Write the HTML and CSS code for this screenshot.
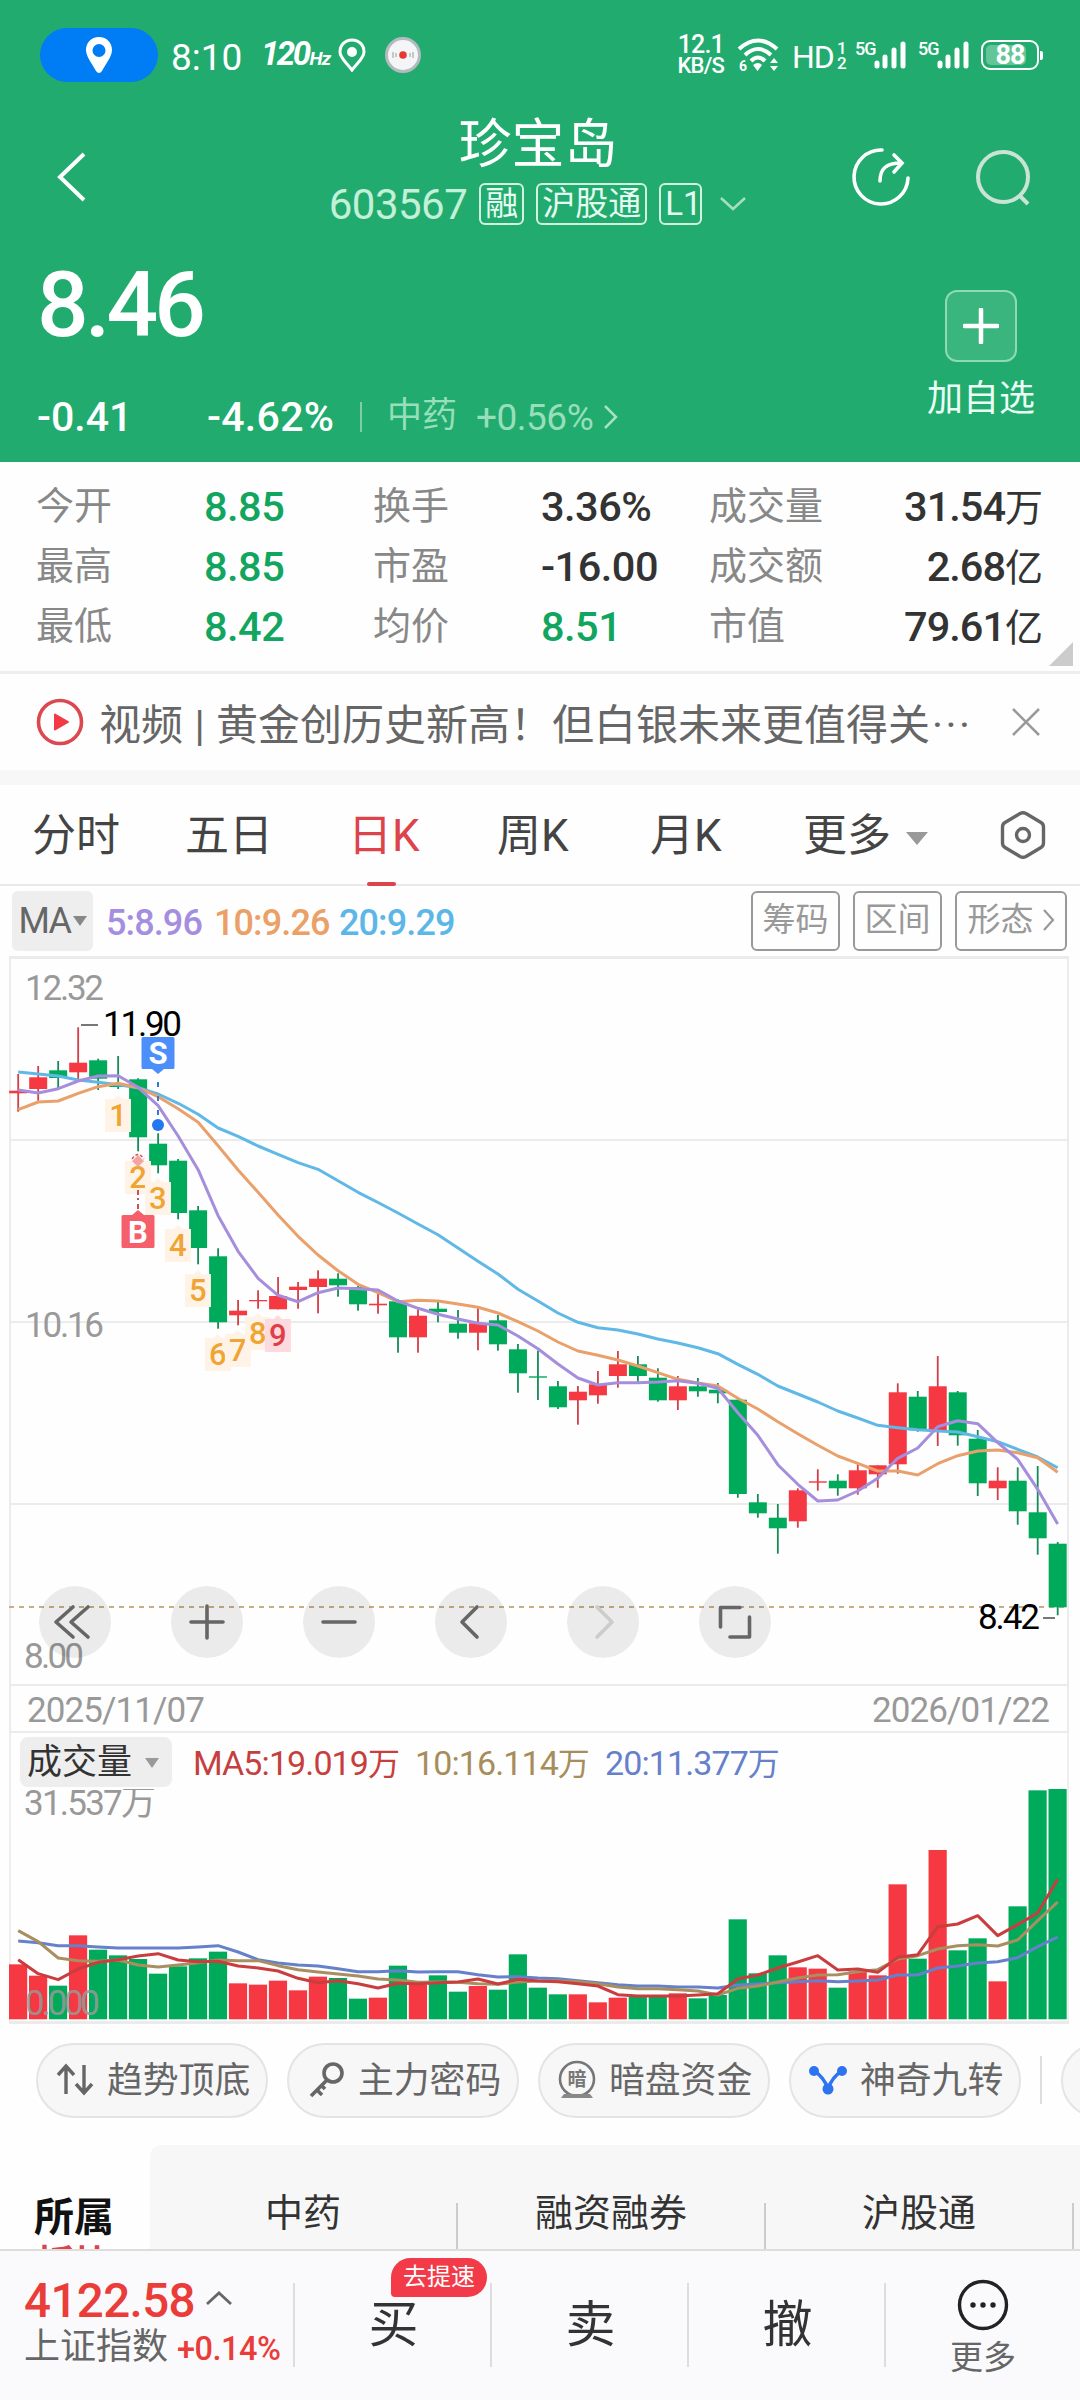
FILE: index.html
```html
<!DOCTYPE html>
<html lang="zh-CN">
<head>
<meta charset="utf-8">
<title>珍宝岛 603567</title>
<link rel="stylesheet" href="styles.css">
</head>
<body>
<header class="top">
  <div class="status">
    <div class="status-left">
      <span class="pill-loc"><svg width="28" height="36" viewBox="0 0 28 36"><path fill="#fff" fill-rule="evenodd" d="M14 0C6 0 1 6 1 13c0 6 5 12 10 21q3 4 6 0c5-9 10-15 10-21C27 6 22 0 14 0zm0 7a6.5 6.5 0 1 1 0 13a6.500 6.500 0 0 1 0-13z"/></svg></span>
      <span class="clock">8:10</span>
      <span class="hz">120<small>Hz</small></span>
      <svg class="pin" width="28" height="34" viewBox="0 0 28 34"><path d="M14 2C7 2 2 7 2 14c0 6 6 10 12 18c6-8 12-12 12-18C26 7 21 2 14 2z" fill="none" stroke="#fff" stroke-width="3"/><circle cx="14" cy="14" r="5" fill="#fff"/></svg>
      <svg class="disc" width="36" height="36" viewBox="0 0 36 36"><circle cx="18" cy="18" r="16.500" fill="#f4f5f6" stroke="#b4bac0" stroke-width="3"/><circle cx="18" cy="18" r="3.800" fill="#e53935"/><path d="M8 15v6M11 16v4M28 15v6M25 16v4" stroke="#999" stroke-width="1"/></svg>
    </div>
    <div class="status-right">
      <span class="speed"><span>12.1</span><span>KB/S</span></span>
      <svg class="wifi" width="42" height="34" viewBox="0 0 42 34"><g fill="none" stroke="#fff" stroke-width="4"><path d="M2 11Q21-6 40 11"/><path d="M8 17Q21 5 34 17"/><path d="M14 23Q21 16 28 23"/></g><path d="M16 27q5-4 9 0l-4.500 6zM33 25l4-5 4 5zM33 28l4 5 4-5z" fill="#fff"/><text x="2" y="33" class="tiny-six">6</text></svg>
      <span class="hd">HD</span><span class="sim">1<br>2</span>
      <span class="net"><b>5G</b><svg width="33" height="28" viewBox="0 0 33 28"><path stroke="#fff" stroke-width="5" stroke-linecap="round" d="M3 22v3M11 16v9M20 9v16M29 3v22"/></svg></span>
      <span class="net"><b>5G</b><svg width="33" height="28" viewBox="0 0 33 28"><path stroke="#fff" stroke-width="5" stroke-linecap="round" d="M3 22v3M11 16v9M20 9v16M29 3v22"/></svg></span>
      <span class="battery"><i></i><em>88</em></span><span class="nub"></span>
    </div>
  </div>

  <div class="nav">
    <svg class="back" width="32" height="52" viewBox="0 0 32 52"><path d="M28 3L4 26L28 49" fill="none" stroke="#fff" stroke-width="4"/></svg>
    <div class="title">
      <h1>珍宝岛</h1>
      <div class="code-row">
        <span class="code">603567</span><span class="tag">融</span><span class="tag">沪股通</span><span class="tag latin">L1</span>
        <svg width="28" height="18" viewBox="0 0 28 18"><path d="M2 3L14 14L26 3" fill="none" stroke="#a5dfc2" stroke-width="2.500"/></svg>
      </div>
    </div>
    <svg class="share" width="64" height="64" viewBox="0 0 64 64"><g fill="none" stroke="#fff" stroke-width="3.600" stroke-linecap="round"><path d="M33 5A27 27 0 1 0 59 33"/><path d="M31 36C31 24 37 18 52 18M45 10l8 8-8 9"/></g></svg>
    <svg class="search" width="62" height="62" viewBox="0 0 62 62"><g fill="none" stroke="#c9e3d5" stroke-width="4"><circle cx="31" cy="30" r="25"/><path d="M47 48l9 9"/></g></svg>
  </div>

  <div class="quote">
    <div class="quote-left">
      <div class="price">8.46</div>
      <div class="change">
        <span class="diff">-0.41</span><span class="pct">-4.62%</span><i></i>
        <span class="sector">中药</span><span class="sector-pct">+0.56%</span>
        <svg width="16" height="26" viewBox="0 0 16 26"><path d="M2 2L13 13L2 24" fill="none" stroke="#a5e2c4" stroke-width="2.500"/></svg>
      </div>
    </div>
    <div class="add">
      <span class="add-box"><svg width="36" height="36" viewBox="0 0 36 36"><path d="M18 1.500v33M1.500 18h33" stroke="#fff" stroke-width="4.500" stroke-linecap="round"/></svg></span>
      <span class="add-text">加自选</span>
    </div>
  </div>
</header>

<section class="stats">
  <span>今开</span><b class="g">8.85</b><span>换手</span><b>3.36%</b><span>成交量</span><b class="r">31.54<em>万</em></b>
  <span>最高</span><b class="g">8.85</b><span>市盈</span><b>-16.00</b><span>成交额</span><b class="r">2.68<em>亿</em></b>
  <span>最低</span><b class="g">8.42</b><span>均价</span><b class="g">8.51</b><span>市值</span><b class="r">79.61<em>亿</em></b>
  <i class="corner"></i>
</section>

<section class="news">
  <svg width="48" height="48" viewBox="0 0 48 48"><circle cx="24" cy="24" r="21.500" fill="none" stroke="#dc4850" stroke-width="3.600"/><path d="M19 16.500L32 24L19 31.500z" fill="#f23a44" stroke="#f23a44" stroke-width="2" stroke-linejoin="round"/></svg>
  <p>视频<em>|</em>黄金创历史新高！但白银未来更值得关<u>···</u></p>
  <svg class="close" width="30" height="30" viewBox="0 0 30 30"><path d="M2 2l26 26M28 2L2 28" stroke="#9a9a9a" stroke-width="2.500"/></svg>
</section>

<nav class="tabs">
  <span>分时</span><span>五日</span><span class="on">日K</span><span>周K</span><span>月K</span><span>更多<i class="tri"></i></span>
  <svg width="48" height="50" viewBox="0 0 48 50"><path d="M21 3.500q3-1.500 6 0l15 9q2.500 1.500 2.500 4.500v16q0 3-2.500 4.500l-15 9q-3 1.500-6 0l-15-9q-2.500-1.500-2.500-4.500V17q0-3 2.500-4.500z" fill="none" stroke="#666" stroke-width="3.400"/><circle cx="24" cy="25" r="6.500" fill="none" stroke="#666" stroke-width="3.400"/></svg>
</nav>

<section class="ma">
  <span class="ma-chip">MA<i class="tri small"></i></span>
  <span class="m5">5:8.96</span><span class="m10">10:9.26</span><span class="m20">20:9.29</span>
  <span class="btns"><span>筹码</span><span>区间</span><span>形态<svg width="13" height="24" viewBox="0 0 13 24"><path d="M2 2l9 10-9 10" fill="none" stroke="#999" stroke-width="2.200"/></svg></span></span>
</section>

<section class="kline">
  <svg id="kline" width="1080" height="777" viewBox="0 956 1080 777"></svg>
  <div class="tools">
    <span><svg viewBox="0 0 72 72"><path d="M34 21L17 36l17 15M49 21L32 36l17 15"/></svg></span>
    <span><svg viewBox="0 0 72 72"><path d="M36 20v32M20 36h32"/></svg></span>
    <span><svg viewBox="0 0 72 72"><path d="M20 36h32"/></svg></span>
    <span><svg viewBox="0 0 72 72"><path d="M42 21L27 36l15 15"/></svg></span>
    <span class="off"><svg viewBox="0 0 72 72"><path d="M30 21l15 15-15 15"/></svg></span>
    <span><svg viewBox="0 0 72 72"><path d="M41 21.500H21.500V41M50.500 31v20H31"/></svg></span>
  </div>
</section>

<section class="volume">
  <div class="vol-head">
    <span class="vol-chip">成交量<i class="tri small"></i></span>
    <span class="v5">MA5:19.019<em>万</em></span><span class="v10">10:16.114<em>万</em></span><span class="v20">20:11.377<em>万</em></span>
  </div>
  <svg id="volume" width="1080" height="235" viewBox="0 1789 1080 235"></svg>
</section>

<section class="pills">
  <span><svg width="38" height="34" viewBox="0 0 38 34"><path d="M10 31V4M2 12l8-9 8 9M28 2v27M20 21l8 9 8-9" fill="none" stroke="#666" stroke-width="3.400"/></svg>趋势顶底</span>
  <span><svg width="38" height="38" viewBox="0 0 38 38"><g fill="none" stroke="#666" stroke-width="3.600"><circle cx="26" cy="12" r="9"/><path d="M20 19L4 35M9 28l6 6M14 24l4 4"/></g></svg>主力密码</span>
  <span><svg width="38" height="40" viewBox="0 0 38 40"><circle cx="19" cy="19" r="17" fill="none" stroke="#777" stroke-width="2.600"/><path d="M3 38l3-4h26l3 4z" fill="#888"/><text x="19" y="26" text-anchor="middle" class="an">暗</text></svg>暗盘资金</span>
  <span><svg width="38" height="30" viewBox="0 0 38 30"><path d="M5 6Q15 12 19 24Q23 12 33 6" fill="none" stroke="#2e74f0" stroke-width="3.500"/><circle cx="5" cy="6" r="5" fill="#2e74f0"/><circle cx="33" cy="6" r="5" fill="#2e74f0"/><circle cx="19" cy="24" r="5.500" fill="#2e74f0"/></svg>神奇九转</span>
  <i></i><span></span>
</section>

<section class="belong">
  <div class="belong-name">所属<em>板块</em></div>
  <div class="belong-list"><span>中药</span><span>融资融券</span><span>沪股通</span></div>
</section>

<footer class="bottom">
  <div class="index">
    <div class="idx-top"><b>4122.58</b><svg width="28" height="16" viewBox="0 0 28 16"><path d="M2 14L14 3l12 11" fill="none" stroke="#666" stroke-width="2.800"/></svg></div>
    <div class="idx-sub">上证指数<b>+0.14%</b></div>
  </div>
  <span class="act">买<em>去提速</em></span><span class="act">卖</span><span class="act">撤</span>
  <span class="more"><svg width="54" height="54" viewBox="0 0 54 54"><circle cx="27" cy="27" r="23.500" fill="none" stroke="#222" stroke-width="3.400"/><g fill="#222"><circle cx="17" cy="27" r="2.700"/><circle cx="27" cy="27" r="2.700"/><circle cx="37" cy="27" r="2.700"/></g></svg>更多</span>
</footer>
<script src="chart.js"></script>
</body>
</html>
```
FILE: styles.css
```css
* { box-sizing: border-box; }
body { margin: 0; width: 1080px; height: 2400px; overflow: hidden; background: #fefefe; font-family: Roboto, "Noto Sans CJK SC", sans-serif; color: #333; }
svg { display: block; flex: none; }
i, em, u { font-style: normal; text-decoration: none; }
b, h1 { font-weight: 500; margin: 0; }
p { margin: 0; }
span { white-space: nowrap; }

.top { height: 462px; background: #22ab6f; color: #fff; }
.status { height: 110px; display: flex; justify-content: space-between; padding: 0 37px 0 40px; }
.status-left, .status-right { display: flex; align-items: center; }
.pill-loc { width: 118px; height: 54px; border-radius: 27px; background: #007cf5; display: flex; align-items: center; justify-content: center; }
.clock { font-size: 37px; font-weight: 400; margin-left: 13px; line-height: 40px; padding-top: 5px; width: 90px; }
.hz { font-size: 33px; font-weight: 700; font-style: italic; letter-spacing: -2.500px; width: 77px; line-height: 40px; padding-top: 2px; }
.hz small { font-size: 19px; letter-spacing: -1px; margin-left: 1px; }
.disc { margin-left: 19px; }
.speed { display: flex; flex-direction: column; align-items: flex-end; font-size: 25px; font-weight: 500; line-height: 21px; width: 52px; margin-right: 13px; letter-spacing: -.8px; }
.speed span:last-child { font-size: 22px; }
.wifi { margin-right: 13px; }
.tiny-six { font: 700 14px Roboto; fill: #fff; }
.hd { font-size: 32px; line-height: 40px; padding-top: 3px; width: 44px; letter-spacing: -1px; }
.sim { font-size: 17px; line-height: 15px; width: 19px; font-weight: 500; padding-top: 1px; padding-left: 1px; }
.net { display: flex; width: 63px; height: 28px; }
.net b { font-size: 18px; line-height: 16px; width: 19px; letter-spacing: -1px; }
.battery { width: 58px; height: 30px; border: 2.500px solid #fff; border-radius: 9px; position: relative; display: flex; align-items: center; justify-content: center; font-size: 27px; font-weight: 700; line-height: 26px; }
.battery i { position: absolute; left: 3px; top: 3px; bottom: 3px; width: 40px; background: #64c698; border-radius: 5px; }
.battery em { position: relative; letter-spacing: -1px; }
.nub { width: 3px; height: 9px; background: #fff; margin-left: 1px; border-radius: 0 2px 2px 0; }

.nav { height: 130px; display: grid; grid-template-columns: 204px 666px 126px 84px; }
.back { margin: 41px 0 0 56px; }
.title { display: flex; flex-direction: column; align-items: center; padding-left: 2px; }
h1 { font-size: 53px; font-weight: 400; line-height: 70px; height: 68px; }
.code-row { display: flex; align-items: center; height: 52px; }
.code { font-size: 42px; color: #c2f0d9; margin-right: 12px; letter-spacing: -.5px; }
.tag { font-size: 33px; line-height: 38px; height: 42px; padding: 0 4px; border: 2px solid #d2f3e2; border-radius: 6px; margin-right: 12px; color: #e6fbf1; }
.latin { width: 43px; text-align: center; }
.tag + svg { margin-left: 5px; }
.share { margin: 35px 0 0 -21px; }
.search { margin: 37px 0 0 -24px; }

.quote { display: flex; justify-content: space-between; height: 222px; padding: 0 44px 0 37px; }
.price { font-size: 91px; font-weight: 500; line-height: 100px; margin-top: 15px; letter-spacing: -3.800px; }
.change { display: flex; align-items: center; height: 50px; margin-top: 37px; }
.diff, .pct { font-size: 41px; font-weight: 500; }
.diff { width: 170px; }
.pct { width: 153px; letter-spacing: .3px; }
.change i { width: 2px; height: 30px; background: #80cda8; margin-right: 25px; }
.sector { font-size: 35px; color: #96dfba; width: 89px; line-height: 40px; padding-bottom: 3px; }
.sector-pct { font-size: 37px; color: #96dfba; width: 127px; letter-spacing: -.5px; }
.add { width: 110px; display: flex; flex-direction: column; align-items: center; margin-top: 50px; }
.add-box { width: 72px; height: 72px; border: 2px solid #8fd9b5; border-radius: 12px; background: #3ab57e; display: flex; align-items: center; justify-content: center; }
.add-text { font-size: 36px; line-height: 40px; margin-top: 17px; color: #eafff5; }

.stats { position: relative; height: 212px; border-bottom: 3px solid #eee; padding: 14px 37px 0 36px; display: grid; grid-template-columns: 168px 169px 168px 168px 120px 214px; grid-template-rows: 60px 60px 60px; line-height: 60px; }
.stats span { font-size: 38px; color: #888; }
.stats b { font-size: 41.500px; color: #333; letter-spacing: -.5px; padding-top: 1px; }
.stats .g { color: #12a560; }
.stats .r { text-align: right; letter-spacing: -1px; }
.stats em { font-size: 38px; font-weight: 400; letter-spacing: 0; }
.corner { position: absolute; right: 7px; bottom: 5px; border: solid transparent; border-width: 0 0 24px 24px; border-bottom-color: #ccc; }

.news { height: 96px; display: flex; align-items: center; padding-left: 36px; }
.news p { font-size: 42px; line-height: 60px; color: #666; margin-left: 15px; width: 912px; padding-top: 7px; white-space: nowrap; }
.news em { display: inline-block; width: 33px; text-align: center; }
.news u { letter-spacing: 2.500px; margin-left: 2px; }

.tabs { height: 116px; border-top: 15px solid #f7f7f7; border-bottom: 2px solid #e9e9e9; display: grid; grid-template-columns: 153px 163px 149px 153px 153px 196px 60px; padding-left: 32px; font-size: 44px; line-height: 99px; color: #444; }
.tabs span { display: flex; align-items: center; padding-top: 2px; }
.tabs .on { color: #dd434b; position: relative; }
.tabs .on::after { content: ""; position: absolute; left: 19px; bottom: 0; width: 29px; height: 4px; background: #dd434b; border-radius: 2px; }
.tabs svg { margin-top: 25px; }
.tri { border: solid transparent; border-width: 13px 11px 0; border-top-color: #999; margin-left: 15px; margin-top: 3px; }
.tri.small { border-width: 10px 7px 0; border-top-color: #888; margin-left: 2px; margin-top: 0; }

.ma { height: 70px; display: flex; align-items: center; padding: 0 13px 0 12px; font-size: 36px; font-weight: 500; letter-spacing: -.9px; }
.m5, .m10, .m20 { padding-top: 4px; }
.ma-chip { width: 81px; height: 60px; border-radius: 6px; background: #eee; display: flex; align-items: center; justify-content: center; font-size: 36px; font-weight: 400; color: #666; margin-right: 13px; letter-spacing: -1.500px; }
.m5 { color: #a58ee0; width: 108px; }
.m10 { color: #eaa066; width: 125px; }
.m20 { color: #5cb7e8; }
.btns { margin-left: auto; display: flex; gap: 13px; font-size: 33px; font-weight: 400; letter-spacing: 0; color: #999; }
.btns span { height: 60px; min-width: 89px; line-height: 50px; padding-bottom: 2px; border: 2px solid #999; border-radius: 6px; display: flex; align-items: center; justify-content: center; gap: 8px; }
.btns span:last-child { min-width: 112px; }

.kline { height: 777px; position: relative; }
.tools { position: absolute; left: 39px; top: 630px; display: flex; gap: 60px; }
.tools span { width: 72px; height: 72px; border-radius: 50%; background: rgba(0,0,0,.075); }
.tools path { fill: none; stroke: #666; stroke-width: 3.600; stroke-linecap: round; stroke-linejoin: round; }
.tools .off path { stroke: #ccc; }

.vol-head { height: 56px; margin: 0 11px 0 9px; border: solid #eee; border-width: 0 2px; padding-left: 9px; display: flex; align-items: center; font-size: 34px; letter-spacing: -.9px; }
.vol-head em { font-size: 32px; letter-spacing: 0; }
.vol-chip { width: 152px; height: 50px; line-height: 50px; padding-top: 1px; border-radius: 8px; background: #eee; color: #333; font-size: 35px; display: flex; align-items: center; padding-left: 7px; margin: 2px 21px 0 0; letter-spacing: 0; }
.vol-chip .tri { margin-left: 13px; border-top-color: #999; }
.v5 { color: #c63f3f; width: 222px; }
.v10 { color: #a88d5c; width: 190px; }
.v20 { color: #6680cc; }
.axis { font-size: 35px; fill: #999; }
.num { font-size: 31px; font-weight: 500; fill: #efa434; text-anchor: middle; }
.flag { font-size: 31px; font-weight: 700; fill: #fff; text-anchor: middle; }

.pills { height: 121px; padding: 19px 0 0 36px; display: flex; overflow: hidden; gap: 19px; }
.pills span { flex: none; width: 232px; height: 75px; line-height: 60px; padding-top: 1px; border: 2px solid #e4e4e4; border-radius: 38px; background: #f7f7f7; color: #666; font-size: 35.800px; display: flex; align-items: center; padding-left: 18px; gap: 13px; }
.pills svg { margin-bottom: 3px; }
.pills i { flex: none; width: 2px; height: 48px; background: #ddd; margin: 13px 0 0 0; }
.an { font-size: 19px; font-weight: 700; fill: #777; }

.belong { height: 104px; display: flex; overflow: hidden; }
.belong-name { width: 150px; padding: 52px 0 0 34px; font-size: 40px; line-height: 42px; font-weight: 700; color: #111; }
.belong-name em { display: block; color: #dd434b; font-size: 38px; margin-top: 4px; padding-left: 2px; }
.belong-list { flex: 1; background: #f7f7f7; border-radius: 12px 0 0 0; display: flex; font-size: 38px; line-height: 136px; }
.belong-list span { flex: none; width: 308px; padding-right: 2px; text-align: center; background: linear-gradient(#ccc, #ccc) right 58px / 2px 60px no-repeat; }

.bottom { height: 151px; border-top: 2px solid #ddd; background: #fafafc; display: flex; }
.index { width: 295px; padding: 25px 0 0 24px; background: linear-gradient(#ddd, #ddd) right 32px / 2px 84px no-repeat; }
.idx-top { display: flex; align-items: center; height: 50px; color: #ea3d3a; font-size: 47.500px; gap: 11px; }
.idx-top b { width: 170px; letter-spacing: -.6px; }
.idx-top svg { margin-bottom: 6px; }
.idx-sub { font-size: 36px; line-height: 42px; color: #666; display: flex; }
.idx-sub b { color: #ea3d3a; font-size: 32.500px; margin-left: 9px; letter-spacing: -.5px; padding-top: 2px; }
.act { width: 197px; text-align: center; font-size: 50px; line-height: 148px; position: relative; background: linear-gradient(#ddd, #ddd) right 32px / 2px 84px no-repeat; }
.act em { position: absolute; left: 96px; top: 7px; width: 96px; height: 39px; border-radius: 20px 20px 20px 4px; background: #f23a48; color: #fff; font-size: 24px; line-height: 38px; }
.more { flex: 1; display: flex; flex-direction: column; align-items: center; padding-top: 27px; font-size: 33px; line-height: 51px; color: #666; }
```
FILE: chart.js
```js
const UP = '#f53841', DOWN = '#00aa5b';
const X = i => 18.2 + i * 19.99;

// [wick top, body top, body bottom, wick bottom, rising]
const candles = [
[1074,1090.7,1093.3,1111.7,1],[1066,1077.3,1089,1100.7,1],[1061,1070.3,1078,1090,0],[1027.3,1062.7,1072.3,1082,1],
[1058.7,1060.3,1078.7,1090,0],[1056,1085,1087,1089,0],[1078.3,1079.3,1137.3,1151.3,0],[1133.3,1143.7,1165.3,1173.3,0],
[1159,1160.7,1213,1219.3,0],[1206,1210.3,1248,1264.3,0],[1248.3,1256.3,1322.3,1328.7,0],[1300,1310.7,1315.3,1325.3,1],
[1290.3,1300,1301.3,1308.7,1],[1277,1296,1309.3,1309.3,1],[1282,1286.7,1290,1308.7,1],[1270.3,1278.7,1287,1313.3,1],
[1273.3,1278.7,1285.3,1296.7,0],[1286,1287,1304.3,1310.7,0],[1294,1303.7,1305.3,1313.7,1],[1299.3,1301.3,1337.3,1352.7,0],
[1309.3,1315.7,1337.3,1352.7,1],[1301.3,1308.7,1312,1322.3,0],[1310,1323.7,1332.7,1338.7,0],[1307.3,1323.3,1332.7,1350.3,1],
[1315,1320.3,1344.3,1350.7,0],[1344,1349.3,1373.3,1392.7,0],[1350.7,1376.3,1377.7,1400,0],[1381,1386.3,1407.3,1409,0],
[1386,1391.7,1400.3,1424.7,1],[1371,1384.3,1395.3,1403.7,1],[1351,1364.3,1376,1387.7,1],[1356,1364.3,1376,1381.7,0],
[1368.3,1377.7,1400.3,1401.7,0],[1376,1386.3,1400.3,1410,1],[1378,1386.3,1391.3,1396.7,0],[1383,1389.7,1393.3,1403.3,0],
[1399.3,1399.7,1494,1497.7,0],[1494,1502.3,1513.3,1517.7,0],[1504,1517.7,1528.3,1553.7,0],[1488.3,1490.3,1521.3,1527.7,1],
[1469.3,1481.3,1482.7,1490.7,1],[1474.3,1480.7,1488.3,1495.7,0],[1464.3,1470.3,1488.3,1494.7,1],[1465.3,1465.3,1474.3,1487.7,1],
[1383.3,1392.3,1464.3,1473.7,1],[1391,1396.7,1430.3,1431.7,0],[1356,1386.3,1431.7,1446,1],[1391,1392.3,1435.3,1445.7,0],
[1430,1438.7,1483.3,1496,0],[1467.3,1480.7,1488.3,1500,1],[1467.3,1480.7,1511.3,1524.7,0],[1466,1512.3,1538.3,1554.7,0],
[1542,1543.7,1607.3,1615.3,0]];

const ma5 = [1090,1093,1088.7,1081,1076,1075.7,1087.3,1105.7,1136,1169.7,1215.7,1251.3,1278.3,1295.3,1301.7,1292.7,1288,1288.7,1290,1301,1308.3,1314.3,1319,1323.3,1325,1336,1348.7,1364,1378,1385,1382.7,1382.7,1382,1380.7,1383.3,1388.3,1412.7,1435.3,1464.7,1484.3,1501,1500,1491,1478.3,1458.3,1448,1426.7,1420.7,1423.7,1442.7,1459.3,1489.3,1524];
const ma10 = [1109.7,1102,1101,1093.3,1086.7,1083.3,1087.7,1096.7,1108.7,1122.3,1145.7,1170,1192.3,1215,1236.3,1255,1270.7,1284.3,1292.7,1301.7,1300.3,1301,1304,1307.3,1313,1321.7,1331,1342,1351,1355.3,1360,1366,1372.7,1379.3,1383,1386,1398.3,1409,1421.7,1433.7,1445.3,1456,1463.3,1471,1471,1475,1463.7,1455.7,1451,1450,1452.7,1457.7,1472.3];
const ma20 = [1072,1074,1076,1080,1082.3,1084.7,1087.7,1094,1103.3,1114.3,1128,1136.3,1146,1154.3,1162.7,1169.3,1180.7,1192.3,1202.5,1213,1224,1234.7,1248,1261.3,1274,1289.3,1301,1313,1322.3,1327.7,1330,1334,1339,1343,1347.7,1353.7,1364.3,1374.3,1386,1394,1402,1411,1418,1425.3,1427.7,1429.7,1431,1432,1436.7,1441.7,1449.3,1457,1467.7];

// volume series, in thirds of a pixel below y = 1770
const vol = [583,617,647,496,539,556,567,611,589,565,545,640,644,632,661,620,624,686,683,587,643,616,665,648,659,553,653,673,673,697,683,681,681,670,685,675,448,610,556,592,596,653,604,616,343,566,240,541,505,634,409,61,55];
const vma5 = [569,611,629,597,577,569,558,551,570,575,574,588,594,603,625,638,632,641,654,640,641,638,636,627,642,628,633,635,641,648,674,678,678,678,675,671,627,615,594,576,557,600,597,607,562,554,470,462,437,497,464,429,328];
const vma10 = [482,515,564,572,574,570,585,591,585,578,570,572,572,587,599,606,612,618,627,630,637,636,637,641,643,636,633,632,635,641,651,656,656,659,663,675,655,648,636,624,615,614,605,599,567,557,537,527,524,528,510,452,396];
const vma20 = [513,518,527,527,531,534,534,534,534,531,527,546,569,579,585,588,596,605,605,602,606,605,605,614,621,620,624,626,632,638,644,648,648,651,651,654,645,642,638,635,632,635,633,630,615,615,594,588,579,575,563,530,501];

const rect = (x, y, w, h, f, extra = '') => `<rect x="${x}" y="${y}" width="${w}" height="${h}" fill="${f}" ${extra}/>`;
const poly = (ys, c) => `<polyline points="${ys.map((y, i) => X(i) + ',' + y).join(' ')}" fill="none" stroke="${c}" stroke-width="3" stroke-linejoin="round"/>`;
const text = (s, x, y, w, cls, extra = '') => `<text x="${x}" y="${y}" ${w ? `textLength="${w}"` : ''} class="${cls}" ${extra}>${s}</text>`;

let k = '';
for (const y of [956, 1139, 1321, 1503, 1684, 1731]) k += rect(9, y, 1060, y === 956 ? 3 : 2, '#ebebeb');
k += rect(9, 956, 2, 777, '#ebebeb') + rect(1067, 956, 2, 777, '#ebebeb');
k += text('12.32', 25, 1000, 79, 'axis') + text('10.16', 25, 1337, 79, 'axis') + text('8.00', 24, 1668, 60, 'axis');
k += text('2025/11/07', 27, 1722, 178, 'axis') + text('2026/01/22', 872, 1722, 178, 'axis');
k += '<path d="M9 1607H1068" stroke="#c9ad85" stroke-width="2" stroke-dasharray="5 5"/>';
candles.forEach(([a, b, c, d, up], i) => {
  k += rect(X(i) - 0.9, a, 1.8, d - a, up ? '#d23f48' : '#178a58') + rect(X(i) - 9, b, 18, c - b, up ? UP : DOWN);
});
k += poly(ma20, '#5fb8e6') + poly(ma10, '#e9a06b') + poly(ma5, '#a58edb');
const marks = [[5,1132],[6,1194],[7,1215],[8,1262],[9,1307],[10,1371],[11,1367],[12,1350],[13,1352]];
marks.forEach(([i, y], n) => {
  const x = X(i) - 0.2, f = n === 8 ? '#fddadd' : '#fff3e7';
  k += `<path d="M${x - 13} ${y - 33}h9l4-4 4 4h9v33h-26z" fill="${f}"/>` + text(n + 1, x, y - 6, 0, 'num', n === 8 ? 'style="fill:#e23c46"' : '');
});
k += '<path d="M81 1025H98M1043 1618H1055" stroke="#777" stroke-width="2"/>';
k += text('11.90', 103, 1036, 79, 'axis', 'style="fill:#000"') + text('8.42', 978, 1629, 62, 'axis', 'style="fill:#000"');
k += '<path d="M158 1082V1118" stroke="#3579d8" stroke-width="2" stroke-dasharray="5 9"/><circle cx="158" cy="1125" r="6" fill="#2377ef"/>';
k += '<path d="M143 1037h30q1.500 0 1.500 1.500v29q0 1.500-1.500 1.500h-9l-6 5-6-5h-9q-1.500 0-1.500-1.500v-29q0-1.500 1.500-1.500z" fill="#4c8ffb"/>' + text('S', 158, 1064, 0, 'flag');
k += '<path d="M138 1190V1210" stroke="#c9505c" stroke-width="2" stroke-dasharray="5 3 2 4"/><path d="M138 1155l6 6-6 6-6-6z" fill="#f3a5a6"/><path d="M132 1159q6-9 12 0" fill="none" stroke="#d8525c" stroke-width="1.500" stroke-dasharray="3 2"/>';
k += '<path d="M123 1215h9l6-5 6 5h9q1.500 0 1.500 1.500v30q0 1.500-1.500 1.500h-30q-1.500 0-1.500-1.500v-30q0-1.500 1.500-1.500z" fill="#f45f6b"/>' + text('B', 138, 1243, 0, 'flag');
document.getElementById('kline').innerHTML = k;

const V = v => 1770 + v / 3;
let q = rect(9, 1789, 2, 235, '#eee') + rect(1067, 1789, 2, 235, '#eee') + rect(9, 2021, 1060, 3, '#ebebeb');
q += text('31.537万', 24, 1815, 132, 'axis');
vol.forEach((v, i) => { q += rect(X(i) - 9.2, V(v), 18.2, 2019.3 - V(v), candles[i][4] ? UP : DOWN); });
q += text('0.000', 25, 2015, 75, 'axis', 'opacity=".85"');
q += poly(vma20.map(V), '#6681cb') + poly(vma10.map(V), '#a98f60') + poly(vma5.map(V), '#c93d3f');
document.getElementById('volume').innerHTML = q;
```
